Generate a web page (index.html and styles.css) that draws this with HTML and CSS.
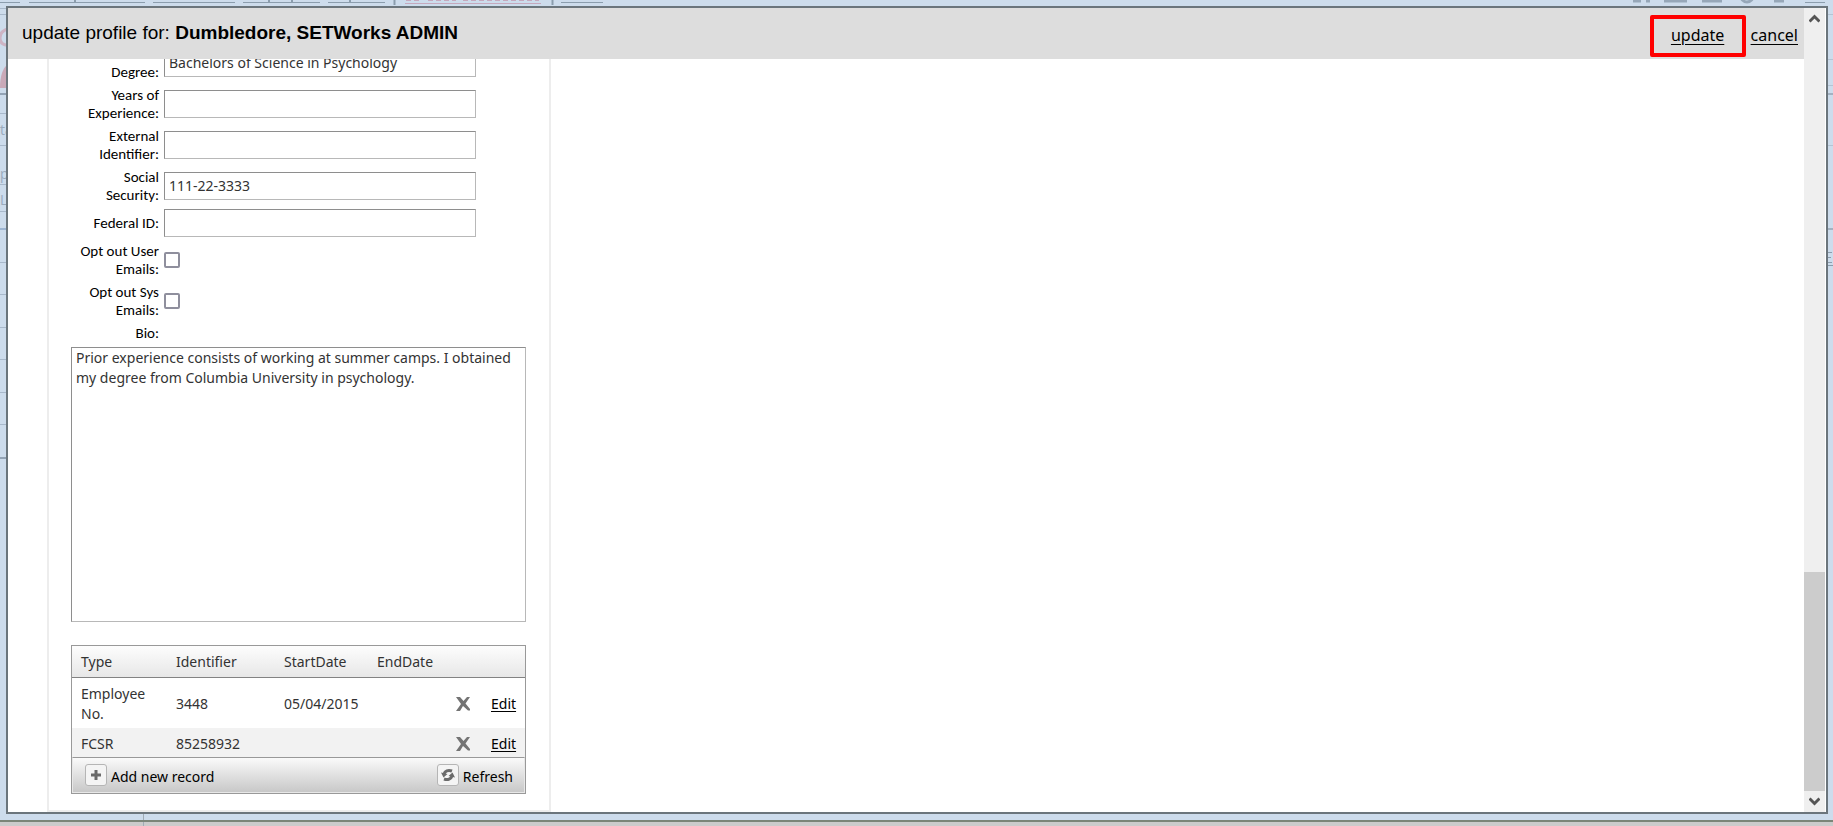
FILE: index.html
```html
<!DOCTYPE html>
<html lang="en">
<head>
<meta charset="utf-8">
<title>Update profile</title>
<link rel="stylesheet" href="styles.css">
</head>
<body>
<div class="backdrop" aria-hidden="true">
  <svg class="backdrop-left" width="620" height="480" viewBox="0 0 620 480">
    <path d="M0 2.500h20M29 2.500h116M153 2.500h82M243 2.500h77M328 2.500h57M561 2.500h42" stroke="#8b9dad"/>
    <path d="M75 0v2M269 0v3M292 0v2M350 0v3M394.500 0v5M552.500 0v5" stroke="#8b9dad" stroke-width="2"/>
    <path d="M405 3.500h136" stroke="#c5a9bd"/>
    <path d="M406 .5h15M428 .5h28M463 .5h76" stroke="#c5a9bd" stroke-dasharray="5 3"/>
    <path d="M0 8.500h8M0 14.500h8M0 113.500h8M0 145.500h8M0 184.500h8M0 211.500h8M0 262.500h8M0 294.500h8M0 327.500h8M0 359.500h8M0 392.500h8M0 424.500h8" stroke="#a9b9cb"/>
    <path d="M0 94h8M0 458h8" stroke="#93a3b5" stroke-width="2"/>
    <path d="M0 229h8" stroke="#9db5d2" stroke-width="2"/>
    <path d="M8 29Q0 31 0 38T8 45" fill="none" stroke="#cdb4c4" stroke-width="3"/>
    <path d="M8 64Q0 70 0 88H8z" fill="#c9a9b8"/>
    <text x="0" y="135">ta</text><text x="0" y="179">p</text><text x="0" y="205">L</text>
  </svg>
  <svg class="backdrop-right" width="240" height="280" viewBox="0 0 240 280">
    <path d="M40 1h8M53 1h4M71 1h23M109 1h20M181 1h10" stroke="#96a7b8" stroke-width="3"/>
    <circle cx="154" cy="-4" r="6" fill="none" stroke="#96a7b8" stroke-width="3"/>
    <path d="M212 2.500h20" stroke="#8b9dad"/>
    <path d="M232 14.500h8M232 59.500h8M232 85.500h8M232 145.500h8" stroke="#b4c4d4"/>
    <path d="M232 94h8M232 229h8" stroke="#a3b2c2" stroke-width="2"/>
    <path d="M233 252.500h6M233 257.500h5M233 262.500h6M233 265.500h7" stroke="#8b9dad"/>
  </svg>
</div>
<main class="dialog">
  <div class="pane">
    <header class="bar">
      <h1 class="title">update profile for: <b>Dumbledore, SETWorks ADMIN</b></h1>
      <nav class="actions">
        <span class="highlight"><a href="#">update</a></span>
        <a href="#">cancel</a>
      </nav>
    </header>
    <div class="content">
      <form class="card">
        <div class="fields">
          <label class="low" for="degree">Degree:</label><input class="text" id="degree" type="text" value="Bachelors of Science in Psychology">
          <label for="years">Years of<br>Experience:</label><input class="text" id="years" type="text">
          <label for="ext">External<br>Identifier:</label><input class="text" id="ext" type="text">
          <label for="ssn">Social<br>Security:</label><input class="text" id="ssn" type="text" value="111-22-3333">
          <label for="fed">Federal ID:</label><input class="text" id="fed" type="text">
          <label for="user">Opt out User<br>Emails:</label><input class="check" id="user" type="checkbox">
          <label for="sys">Opt out Sys<br>Emails:</label><input class="check" id="sys" type="checkbox">
          <label for="bio">Bio:</label>
        </div>
        <textarea class="bio" id="bio">Prior experience consists of working at summer camps. I obtained my degree from Columbia University in psychology.</textarea>
        <div class="records">
          <table>
            <colgroup><col class="c1"><col class="c2"><col class="c3"><col class="c4"><col class="c5"><col></colgroup>
            <thead><tr><th>Type</th><th>Identifier</th><th>StartDate</th><th>EndDate</th><th></th><th></th></tr></thead>
            <tbody>
              <tr><td>Employee No.</td><td>3448</td><td>05/04/2015</td><td></td>
                <td><button class="icon" type="button" aria-label="Delete"><svg width="14" height="14" viewBox="0 0 14 14"><path d="M0 0H4L7.500 4L11 0H14L9.500 6.500L14 12V13.500H12L7 9L4 14H0L5 7z" fill="#747474"/></svg></button></td><td><a href="#">Edit</a></td></tr>
              <tr><td>FCSR</td><td>85258932</td><td></td><td></td>
                <td><button class="icon" type="button" aria-label="Delete"><svg width="14" height="14" viewBox="0 0 14 14"><path d="M0 0H4L7.500 4L11 0H14L9.500 6.500L14 12V13.500H12L7 9L4 14H0L5 7z" fill="#747474"/></svg></button></td><td><a href="#">Edit</a></td></tr>
            </tbody>
          </table>
          <div class="commands">
            <button class="command" type="button"><span class="tile"><svg width="12" height="12" viewBox="0 0 12 12"><path d="M6 1v10M1 6h10" stroke="#6a6a6a" stroke-width="3"/></svg></span><span>Add new record</span></button>
            <button class="command" type="button"><span class="tile"><svg width="14" height="14" viewBox="0 0 14 14"><path d="M3 6C4 3 7 1.500 11 3M11 8C10 11 7 12.500 3 11" fill="none" stroke="#6a6a6a" stroke-width="3"/><path d="M0 4.500L2.500 9.500L6.500 6zM14 9.500L11.500 4.500L7.500 8z" fill="#6a6a6a"/></svg></span><span>Refresh</span></button>
          </div>
        </div>
      </form>
    </div>
  </div>
  <div class="scroll">
    <button class="arrow" type="button" aria-label="Scroll up"><svg width="11" height="9" viewBox="0 0 11 9"><path d="M0.500 7.500L5.500 2.500L10.500 7.500" fill="none" stroke="#555" stroke-width="3"/></svg></button>
    <div class="track"><div class="thumb"></div></div>
    <button class="arrow" type="button" aria-label="Scroll down"><svg width="11" height="9" viewBox="0 0 11 9"><path d="M0.500 1.500L5.500 6.500L10.500 1.500" fill="none" stroke="#555" stroke-width="3"/></svg></button>
  </div>
</main>
</body>
</html>
```
FILE: styles.css
```css
* { box-sizing: border-box; }
body {
  margin: 0;
  height: 100vh;
  padding: 6px 5px 12px 6px;
  font-family: "Noto Sans", "Open Sans", sans-serif;
  font-size: 14px;
  line-height: 20px;
  color: #333;
  overflow: hidden;
}
a { color: #000; text-underline-offset: 2px; }
button { font: inherit; color: #000; background: none; border: 0; padding: 0; }
.backdrop {
  position: absolute;
  inset: 0;
  z-index: -1;
  display: flex;
  justify-content: space-between;
  background: #cddcec;
  border-bottom: 5px solid #cbcbcb;
}
.backdrop text { font: 14px "Open Sans", sans-serif; fill: #9babbd; }
.backdrop::after {
  content: "";
  position: absolute;
  left: 0;
  right: 0;
  bottom: -1px;
  border-bottom: 2px solid #7b8578;
}
.backdrop::before {
  content: "";
  position: absolute;
  left: 143px;
  bottom: -5px;
  height: 14px;
  border-left: 1px solid #a0abb5;
}
.dialog {
  display: flex;
  height: 100%;
  border: 2px solid #6b757c;
  background: #fff;
}
.pane { flex: 1; display: flex; flex-direction: column; min-width: 0; }
.bar {
  display: flex;
  justify-content: space-between;
  flex: none;
  height: 51px;
  padding: 7px 6px 0 14px;
  background: #ddd;
  color: #000;
}
.title {
  margin: 0;
  padding-top: 6px;
  font: 19px/24px "Liberation Sans", Arial, sans-serif;
}
.actions { display: flex; gap: 5px; font-size: 16px; line-height: 40px; }
.actions a { text-underline-offset: 3px; }
.highlight {
  height: 42px;
  width: 96px;
  border: 4px solid #f00;
  border-radius: 2px;
  text-align: center;
  line-height: 32px;
}
.content {
  flex: 1;
  min-height: 0;
  display: flex;
  flex-direction: column;
  justify-content: flex-end;
  overflow: hidden;
}
.card {
  width: 504px;
  margin-left: 39px;
  padding: 0 22px 16px;
  border: 2px solid #ededed;
  border-top: 0;
}
.fields {
  display: grid;
  grid-template-columns: 88px 312px;
  column-gap: 5px;
  row-gap: 5px;
  align-items: center;
}
.fields label {
  font: 15px/18px Carlito, Calibri, "Open Sans", sans-serif;
  color: #000;
  text-align: right;
}
.fields .low { padding-top: 18px; }
.text, .bio {
  font: inherit;
  color: #333;
  background: #fff;
  border: 1px solid;
  border-color: #8e8e8e #b8b8b8 #b8b8b8 #8e8e8e;
  border-radius: 0;
}
.text { width: 100%; height: 28px; padding: 0 4px; }
.check {
  appearance: none;
  width: 16px;
  height: 16px;
  margin: 0;
  border: 2px solid #8f8f9d;
  border-radius: 2px;
  background: #fff;
}
.bio {
  display: block;
  width: 455px;
  height: 275px;
  margin: 5px 0 23px;
  padding: 0 4px;
  resize: none;
  overflow: hidden;
}
.records { width: 455px; border: 1px solid #999; }
table { width: 100%; border-collapse: collapse; table-layout: fixed; }
.c1 { width: 95px; }
.c2 { width: 108px; }
.c3 { width: 93px; }
.c4 { width: 79px; }
.c5 { width: 35px; }
th, td { padding: 6px 0 4px 9px; text-align: left; font-weight: 400; }
th { height: 32px; background: linear-gradient(#fdfdfd, #e7e7e7); border-bottom: 1px solid #828282; }
td:nth-child(1) { padding-right: 20px; }
tbody tr:nth-child(2) { background: #f2f2f2; }
tbody tr:nth-child(2) td { padding-bottom: 3px; }
.icon { display: block; width: 14px; height: 14px; }
.icon svg { display: block; }
.commands {
  display: flex;
  justify-content: space-between;
  height: 36px;
  padding: 6px 11px 0 12px;
  border: 1px solid #e8e8e8;
  border-top: 1px solid #999;
  background: linear-gradient(#fafafa, #c8c8c8);
}
.command { display: flex; align-items: flex-start; gap: 4px; height: 26px; line-height: 26px; }
.tile {
  display: grid;
  place-items: center;
  width: 22px;
  height: 22px;
  border: 1px solid #b5b5b5;
  border-radius: 3px;
  background: #f4f4f4;
}
.scroll {
  display: flex;
  flex-direction: column;
  width: 22px;
  background: #efefef;
  border-right: 1px solid #fff;
}
.arrow { height: 21px; display: grid; place-items: center; }
.track { flex: 1; display: flex; align-items: flex-end; }
.thumb { width: 100%; height: 219px; background: #ccc; }
```
